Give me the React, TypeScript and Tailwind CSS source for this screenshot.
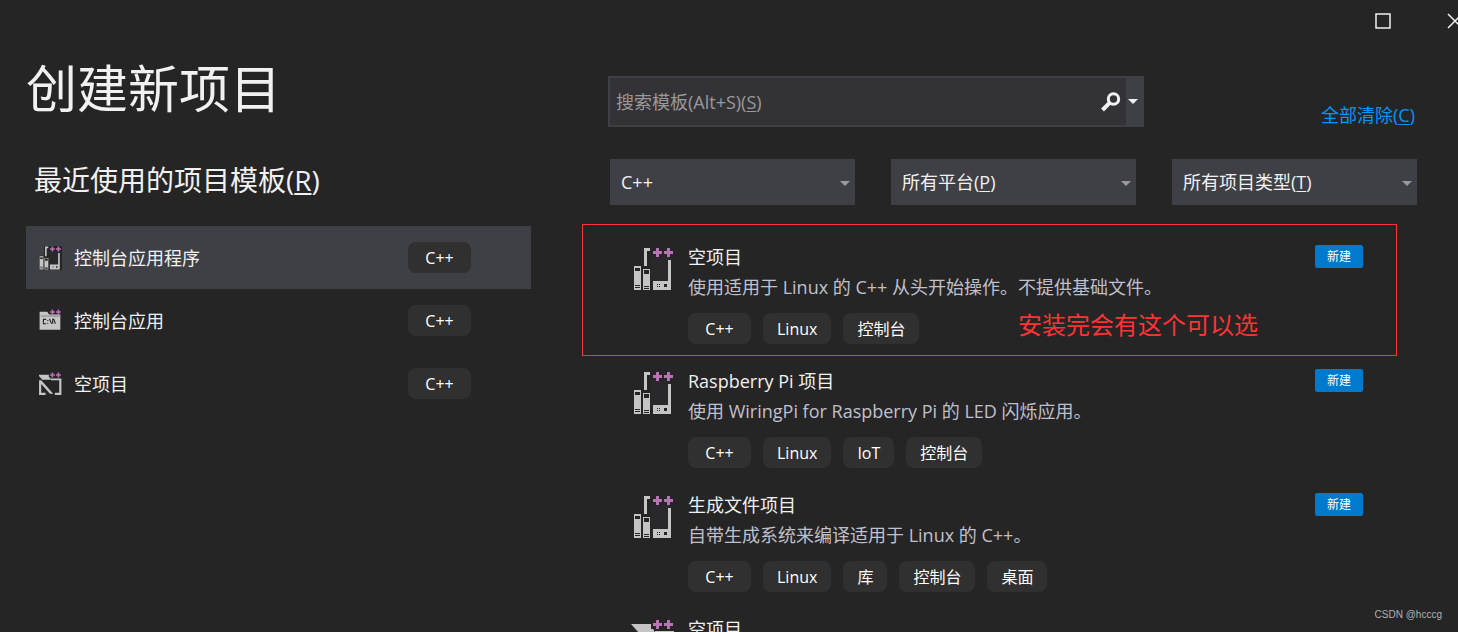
import { useState } from "react";

type IconKind = "linux" | "console" | "empty";

const recent: { name: string; icon: IconKind; tag: string }[] = [
  { name: "控制台应用程序", icon: "linux", tag: "C++" },
  { name: "控制台应用", icon: "console", tag: "C++" },
  { name: "空项目", icon: "empty", tag: "C++" },
];

const templates: {
  name: string;
  description?: string;
  icon: IconKind;
  tags: string[];
  isNew?: boolean;
  note?: string;
}[] = [
  {
    name: "空项目",
    description: "使用适用于 Linux 的 C++ 从头开始操作。不提供基础文件。",
    icon: "linux",
    tags: ["C++", "Linux", "控制台"],
    isNew: true,
    note: "安装完会有这个可以选",
  },
  {
    name: "Raspberry Pi 项目",
    description: "使用 WiringPi for Raspberry Pi 的 LED 闪烁应用。",
    icon: "linux",
    tags: ["C++", "Linux", "IoT", "控制台"],
    isNew: true,
  },
  {
    name: "生成文件项目",
    description: "自带生成系统来编译适用于 Linux 的 C++。",
    icon: "linux",
    tags: ["C++", "Linux", "库", "控制台", "桌面"],
    isNew: true,
  },
  {
    name: "空项目",
    icon: "empty",
    tags: [],
  },
];

function PlusPlus() {
  return (
    <g>
      <path d="M18 0h24v10H18z" fill="#252526" />
      <path
        d="M23 1h3v3h3v3h-3v3h-3V7h-3V4h3zM34 1h3v3h3v3h-3v3h-3V7h-3V4h3z"
        fill="#b873b5"
      />
    </g>
  );
}

function TemplateIcon({ kind, className }: { kind: IconKind; className: string }) {
  return (
    <svg viewBox="0 0 42 44" className={className} aria-hidden="true">
      {kind === "linux" && (
        <>
          <path d="M9 0h33v44H0V18h9z" fill="#252526" />
          <path d="M18 4h19v34H18z" fill="#29292c" />
          <path d="M11 1h6v3h-3v15h-3z" fill="#c5c5c5" />
          <path d="M1 19h7v24H1zM10 22h7v21h-7z" fill="#c5c5c5" />
          <path d="M35 13h3v30H20v-9h15z" fill="#c5c5c5" />
          <path
            d="M2 21h5v3H2zM2 38h5v1H2zM2 40h5v1H2zM11 23h5v4h-5zM11 39h5v1h-5zM11 41h5v1h-5z"
            fill="#252526"
          />
          <path
            d="M24 37h1v1h-1zM26 37h1v1h-1zM24 39h1v1h-1zM26 39h1v1h-1zM31 37h3v3h-3z"
            fill="#252526"
          />
        </>
      )}
      {kind === "console" && (
        <>
          <path d="M1 5h14l3 4h21v29H1z" fill="#c5c5c5" />
          <path d="M3 12h36v2H3z" fill="#8a8a8a" />
          <path
            d="M13 19H8v8h5M16 20v2M16 25v2M19 18l4 9M25 27v-8h2l3 8"
            fill="none"
            stroke="#252526"
            strokeWidth="2"
          />
        </>
      )}
      {kind === "empty" && (
        <>
          <path d="M-2 5h20l4 9H6z" fill="#c5c5c5" />
          <path d="M0 15h4l22 25h-6L4 22v16h8v4H0z" fill="#c5c5c5" />
          <path d="M22 12h19v30H29v-4h8V15H22z" fill="#c5c5c5" />
        </>
      )}
      <PlusPlus />
    </svg>
  );
}

function Tag({ name }: { name: string }) {
  return (
    <span
      className={
        name === "C++"
          ? "flex h-[31px] w-[63px] items-center justify-center rounded-lg bg-[#303031] text-base text-white"
          : "flex h-[31px] items-center rounded-lg bg-[#303031] px-3.5 text-base text-white"
      }
    >
      {name}
    </span>
  );
}

function Caret({ className }: { className: string }) {
  return (
    <svg viewBox="0 0 10 5" className={className} aria-hidden="true">
      <path d="M0 0h10L5 5z" fill="currentColor" />
    </svg>
  );
}

function Filter({
  id,
  label,
  accessKey,
  options,
  initial = "",
}: {
  id: string;
  label: string;
  accessKey?: string;
  options: string[];
  initial?: string;
}) {
  const [value, setValue] = useState(initial);

  return (
    <div className="relative h-[46px] bg-[#3f3f46] text-lg text-[#f1f1f1]">
      <select
        id={id}
        value={value}
        aria-label={label}
        onChange={(e) => setValue(e.target.value)}
        className="h-full w-full appearance-none bg-transparent px-[11px] outline-none"
      >
        {accessKey && <option value="" />}
        {options.map((option) => (
          <option key={option} value={option}>
            {option}
          </option>
        ))}
      </select>
      {value === "" && (
        <label
          htmlFor={id}
          className="pointer-events-none absolute inset-0 flex items-center px-[11px]"
        >
          <span>
            {label}(<u className="underline-offset-2">{accessKey}</u>)
          </span>
        </label>
      )}
      <Caret className="pointer-events-none absolute top-[22px] right-[5px] h-[5px] w-2.5 text-[#999999]" />
    </div>
  );
}

export default function App() {
  const [selected, setSelected] = useState(0);

  return (
    <div className="relative flex h-screen flex-col overflow-hidden bg-[#252526] font-['Open_Sans','Noto_Sans_CJK_SC',sans-serif] text-[#f1f1f1]">
      {/* Window controls */}
      <div className="-mr-[5px] flex h-[42px] shrink-0 items-center justify-end gap-14">
        <button type="button" aria-label="最大化">
          <svg viewBox="0 0 16 16" className="size-4" aria-hidden="true">
            <path d="M1 1h14v14H1z" fill="none" stroke="#f1f1f1" strokeWidth="1.5" />
          </svg>
        </button>
        <button type="button" aria-label="关闭">
          <svg viewBox="0 0 16 16" className="size-4" aria-hidden="true">
            <path d="M1 1l14 14M15 1L1 15" stroke="#f1f1f1" strokeWidth="1.5" />
          </svg>
        </button>
      </div>

      <div className="flex">
        {/* Recent templates */}
        <section className="w-[531px] shrink-0 pl-[26px]">
          <h1 className="h-[92px] text-[51px] leading-[92px]">创建新项目</h1>
          <h2 className="h-[92px] pt-6 pl-2 text-[28px] leading-[44px]">
            最近使用的项目模板(<u className="underline-offset-2">R</u>)
          </h2>
          <ul>
            {recent.map((item, index) => (
              <li key={item.name}>
                <button
                  type="button"
                  onClick={() => setSelected(index)}
                  className={
                    index === selected
                      ? "flex h-[63px] w-full items-center bg-[#3f3f46] pr-[60px] pl-[13px]"
                      : "flex h-[63px] w-full items-center pr-[60px] pl-[13px]"
                  }
                >
                  <TemplateIcon kind={item.icon} className="h-6 w-[23px]" />
                  <span className="ml-3 text-lg">{item.name}</span>
                  <span className="ml-auto">
                    <Tag name={item.tag} />
                  </span>
                </button>
              </li>
            ))}
          </ul>
        </section>

        {/* Search and results */}
        <section className="min-w-0 flex-1 pl-[51px]">
          <div className="flex h-[85px] items-start justify-between pt-[34px] pr-[43px] pl-[26px]">
            <div className="relative flex h-[51px] w-[536px] border-2 border-[#3f3f46] bg-[#333337]">
              <input
                id="search"
                type="text"
                placeholder=" "
                className="peer min-w-0 flex-1 bg-transparent px-1.5 text-lg outline-none"
              />
              <label
                htmlFor="search"
                className="pointer-events-none invisible absolute inset-y-0 left-1.5 flex items-center text-lg text-[#999999] peer-placeholder-shown:visible"
              >
                <span>
                  搜索模板(Alt+S)(<u className="underline-offset-2">S</u>)
                </span>
              </label>
              <button type="button" aria-label="搜索" className="px-[5px]">
                <svg viewBox="0 0 20 20" className="size-5" aria-hidden="true">
                  <circle cx="12.5" cy="7" r="5.2" fill="none" stroke="#f1f1f1" strokeWidth="3" />
                  <path d="M8.8 10.7L1.5 18" stroke="#f1f1f1" strokeWidth="4" />
                </svg>
              </button>
              <button
                type="button"
                aria-label="搜索选项"
                className="flex w-4 items-center bg-[#3f3f46] pl-0.5"
              >
                <Caret className="h-[5px] w-2.5 text-[#f1f1f1]" />
              </button>
            </div>
            <a href="#" className="mt-[25px] text-lg text-[#0097fb]">
              全部清除(<u className="underline-offset-2">C</u>)
            </a>
          </div>

          <div className="mt-8 grid grid-cols-3 gap-9 pr-[41px] pl-7">
            <Filter
              id="language"
              label="所有语言"
              options={["C++", "C#", "Python"]}
              initial="C++"
            />
            <Filter
              id="platform"
              label="所有平台"
              accessKey="P"
              options={["Linux", "Windows"]}
            />
            <Filter
              id="project-type"
              label="所有项目类型"
              accessKey="T"
              options={["IoT", "库", "控制台", "桌面"]}
            />
          </div>

          <ul className="mt-[37px] pr-[61px]">
            {templates.map((item, index) => (
              <li key={index} className="relative flex h-[124px] pr-[34px] pl-[51px]">
                <TemplateIcon
                  kind={item.icon}
                  className="mt-[5px] h-11 w-[42px] shrink-0 overflow-visible"
                />
                <div className="ml-[13px] flex-1">
                  <h3 className="text-lg leading-[30px]">{item.name}</h3>
                  {item.description && (
                    <p className="text-lg leading-[30px] text-[#c0c0cc]">
                      {item.description}
                    </p>
                  )}
                  <div className="mt-[11px] flex gap-3">
                    {item.tags.map((tag) => (
                      <Tag key={tag} name={tag} />
                    ))}
                  </div>
                </div>
                {item.isNew && (
                  <span className="mt-[3px] flex h-[23px] w-12 items-center justify-center rounded-xs bg-[#007acc] text-xs text-white">
                    新建
                  </span>
                )}
                {item.note && (
                  <div className="pointer-events-none absolute inset-x-0 -top-[18px] flex h-[132px] items-end justify-end border border-[#ff3333] pr-[138px] pb-3">
                    <span className="text-2xl leading-9 text-[#ff3333]">
                      {item.note}
                    </span>
                  </div>
                )}
              </li>
            ))}
          </ul>
        </section>
      </div>

      <span className="absolute right-4 bottom-2 font-['Liberation_Sans',sans-serif] text-[10px] leading-[18px] text-[#b0b0b0]">
        CSDN @hcccg
      </span>
    </div>
  );
}
